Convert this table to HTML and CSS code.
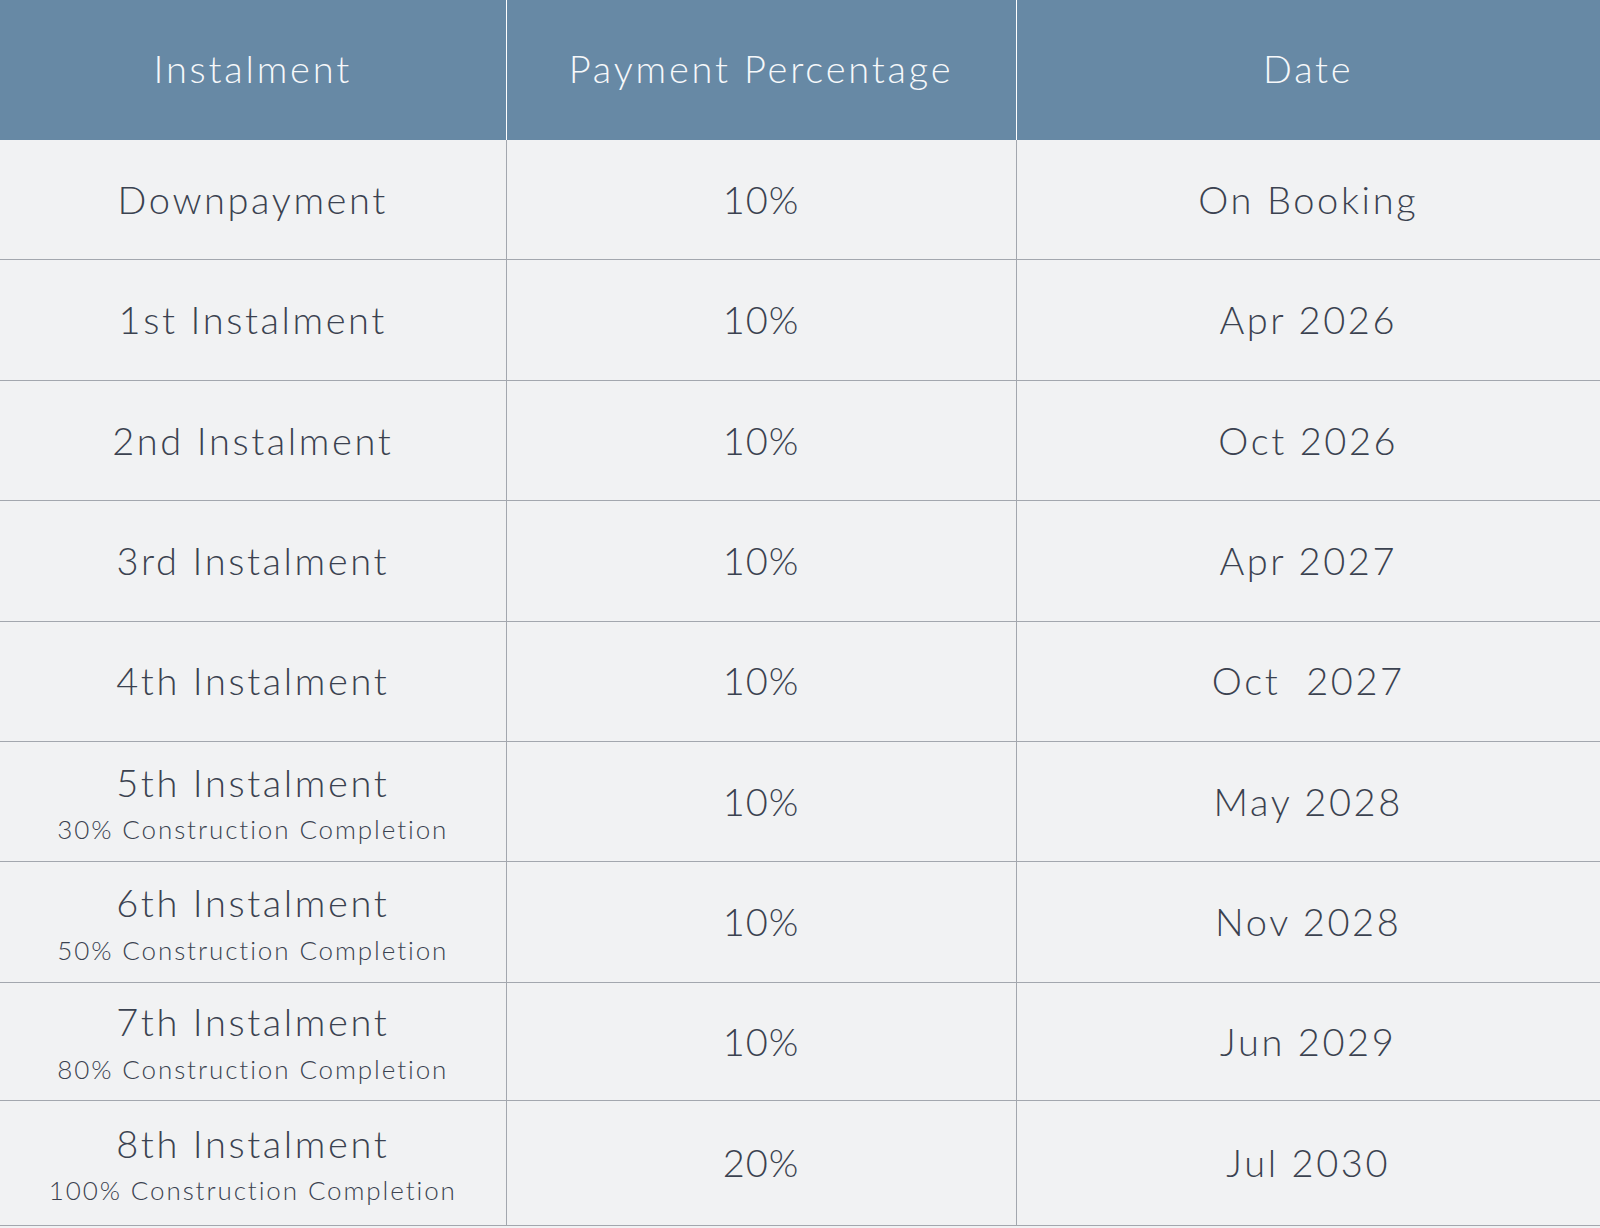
FILE: index.html
```html
<!DOCTYPE html>
<html>
<head>
<meta charset="utf-8">
<link rel="stylesheet" href="styles.css">
</head>
<body>
<table class="plan">
  <colgroup>
    <col class="c1"><col class="c2"><col class="c3">
  </colgroup>
  <thead>
    <tr><th>Instalment</th><th>Payment Percentage</th><th>Date</th></tr>
  </thead>
  <tbody>
    <tr><td>Downpayment</td><td class="pct">10%</td><td>On Booking</td></tr>
    <tr><td>1st Instalment</td><td class="pct">10%</td><td>Apr 2026</td></tr>
    <tr><td>2nd Instalment</td><td class="pct">10%</td><td>Oct 2026</td></tr>
    <tr><td>3rd Instalment</td><td class="pct">10%</td><td>Apr 2027</td></tr>
    <tr><td>4th Instalment</td><td class="pct">10%</td><td>Oct&nbsp; 2027</td></tr>
    <tr><td>5th Instalment<span class="sub">30% Construction Completion</span></td><td class="pct">10%</td><td>May 2028</td></tr>
    <tr><td>6th Instalment<span class="sub">50% Construction Completion</span></td><td class="pct">10%</td><td>Nov 2028</td></tr>
    <tr class="short"><td>7th Instalment<span class="sub">80% Construction Completion</span></td><td class="pct">10%</td><td>Jun 2029</td></tr>
    <tr class="tall"><td>8th Instalment<span class="sub">100% Construction Completion</span></td><td class="pct">20%</td><td>Jul 2030</td></tr>
  </tbody>
</table>
</body>
</html>
```
FILE: styles.css
```css
html, body {
  margin: 0;
  padding: 0;
  background: #f1f2f3;
}
body {
  font-family: "Lato", "Liberation Sans", sans-serif;
  font-weight: 300;
  color: #3b4250;
}
.plan {
  width: 1600px;
  border-collapse: collapse;
  table-layout: fixed;
}
.c1 { width: 506px; }
.c2 { width: 510px; }
.c3 { width: 584px; }
.plan th {
  background: #6789a5;
  color: #f6f8fa;
  font-weight: 300;
  font-size: 38px;
  height: 140px;
  padding: 0 0 4px 0;
  box-sizing: border-box;
  letter-spacing: 2.8px;
  border-left: 1px solid #ffffff;
}
.plan th:first-child { border-left: none; }
.plan td {
  height: 119.4px;
  padding: 0;
  text-align: center;
  font-size: 38px;
  letter-spacing: 2.6px;
  border-left: 1px solid #a3a7ae;
  border-bottom: 1px solid #a3a7ae;
  line-height: 1.2;
}
.plan tr.short td { height: 117.4px; }
.plan tr.tall td { height: 123.5px; }
.plan td.pct { letter-spacing: 1px; }
.plan td:first-child { border-left: none; }
.sub {
  display: block;
  font-size: 26px;
  letter-spacing: 1.9px;
  margin-top: 10px;
  line-height: 1.1;
}
```
